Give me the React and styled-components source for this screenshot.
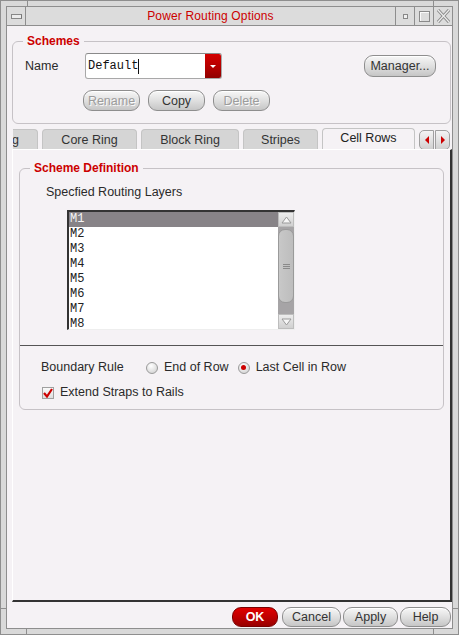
import React from 'react'
import styled, { createGlobalStyle } from 'styled-components'

const GlobalStyle = createGlobalStyle`
  html, body {
    margin: 0;
    padding: 0;
    background: #d9d9d9;
  }
  body {
    font-family: "Liberation Sans", Arial, sans-serif;
    font-size: 12.5px;
    color: #2a2a2a;
  }
`

const RED = '#cc0000'
const LINE = '#8e8e8e'

const Frame = styled.div`
  position: relative;
  box-sizing: border-box;
  width: 459px;
  height: 635px;
  padding: 5px;
  background: #d9d9d9;
  border: 1px solid ${LINE};
`

const Tick = styled.span`
  position: absolute;
  background: ${LINE};
  left: ${(p) => p.$x}px;
  top: ${(p) => p.$y}px;
  width: ${(p) => (p.$v ? 1 : 5)}px;
  height: ${(p) => (p.$v ? 5 : 1)}px;
`

const Inner = styled.div`
  box-sizing: border-box;
  height: 100%;
  display: flex;
  flex-direction: column;
  border: 1px solid ${LINE};
`

const TitleBar = styled.div`
  display: flex;
  height: 18px;
  background: #dcdcdc;
  border-bottom: 1px solid ${LINE};
`

const TitleButton = styled.div`
  width: 18px;
  display: flex;
  align-items: center;
  justify-content: center;
  border-${(p) => (p.$left ? 'right' : 'left')}: 1px solid ${LINE};
`

const MenuBar = styled.span`
  width: 9px;
  height: 3px;
  border: 1px solid #888;
  border-right-color: #777;
  background: #ececec;
`

const MinBox = styled.span`
  width: 3px;
  height: 3px;
  border: 1px solid #888;
  background: #f0f0f0;
`

const MaxBox = styled.span`
  width: 9px;
  height: 9px;
  border: 1px solid #8a8a8a;
  box-shadow: inset 1px 1px 0 #fafafa;
`

const Title = styled.div`
  flex: 1;
  text-align: center;
  color: ${RED};
  font-size: 12px;
  letter-spacing: 0.15px;
  line-height: 18px;
`

const Content = styled.div`
  flex: 1;
  display: flex;
  flex-direction: column;
  background: #f5f2f5;
  padding: 8px 0 0 5px;
`

const Group = styled.fieldset`
  margin: 0 ${(p) => p.$mr || 0}px 0 ${(p) => p.$ml || 0}px;
  padding: 0;
  min-width: 0;
  border: 1px solid #c6c2c6;
  border-radius: 6px;
`

const Legend = styled.legend`
  margin-left: 10px;
  padding: 0 4px;
  color: ${RED};
  font-weight: bold;
  font-size: 12px;
  line-height: 15px;
`

const SchemeBody = styled.div`
  padding: 4px 14px 12px 12px;
`

const Row = styled.div`
  display: flex;
  align-items: center;
  gap: ${(p) => p.$gap || 0}px;
  margin: ${(p) => p.$m || '0'};
`

const Label = styled.span`
  width: ${(p) => (p.$w ? p.$w + 'px' : 'auto')};
  flex: none;
  line-height: 15px;
  white-space: nowrap;
`

const Combo = styled.div`
  display: flex;
  width: 137px;
  height: 26px;
  box-sizing: border-box;
  border: 1px solid #a8a8a8;
  border-top-color: #8a8a8a;
  border-radius: 3px;
  background: #fff;
  overflow: hidden;
`

const ComboText = styled.div`
  flex: 1;
  display: flex;
  align-items: center;
  padding-left: 2px;
  font-family: "Liberation Mono", monospace;
  font-size: 12px;
  color: #111;
`

const Caret = styled.span`
  width: 1px;
  height: 15px;
  background: #111;
`

const ComboArrow = styled.div`
  width: 16px;
  display: flex;
  align-items: center;
  justify-content: center;
  background: linear-gradient(#d40000, #b00000 60%, #900000);
`

const Tri = styled.span`
  width: 0;
  height: 0;
  border-left: 3px solid transparent;
  border-right: 3px solid transparent;
  border-top: 3px solid #fff;
`

const Button = styled.button`
  box-sizing: border-box;
  width: ${(p) => p.$w}px;
  height: ${(p) => p.$h || 21}px;
  padding: 0;
  margin-left: ${(p) => (p.$auto ? 'auto' : '0')};
  border: 1px solid #8e8e8e;
  border-radius: 9px;
  background: linear-gradient(#f7f7f7, #e2e2e2 45%, #c6c6c6);
  box-shadow: inset 0 1px 0 #fff;
  font-family: "Liberation Sans", Arial, sans-serif;
  font-size: 12.5px;
  color: ${(p) => (p.disabled ? '#9c9c9c' : '#333')};
  text-shadow: ${(p) => (p.disabled ? '1px 1px 0 #fafafa' : 'none')};
`

const OkButton = styled(Button)`
  margin-right: 2px;
  border-color: #7a0000;
  background: linear-gradient(#e00000, #c00000 50%, #980000);
  box-shadow: none;
  color: #fff;
  font-weight: bold;
`

const TabStrip = styled.div`
  display: flex;
  align-items: flex-end;
  gap: 4px;
  height: 21px;
  margin: 4px 0 0 1px;
`

const TabClip = styled.div`
  width: 25px;
  height: 20px;
  overflow: hidden;
  display: flex;
  justify-content: flex-end;
  flex: none;
`

const Tab = styled.div`
  box-sizing: border-box;
  flex: none;
  width: ${(p) => p.$w}px;
  height: ${(p) => (p.$active ? 21 : 20)}px;
  display: flex;
  align-items: center;
  justify-content: ${(p) => (p.$end ? 'flex-end' : 'center')};
  padding: ${(p) => (p.$end ? '0 18px 0 0' : p.$active ? '0 0 3px' : '0')};
  border: 1px solid #c4c4c4;
  border-bottom: none;
  border-radius: 4px 4px 0 0;
  background: ${(p) => (p.$active ? '#f5f2f5' : '#d5d5d5')};
  color: ${(p) => (p.$active ? '#222' : '#333')};
  white-space: nowrap;
`

const Arrows = styled.div`
  display: flex;
  gap: 1px;
  margin-bottom: -1px;
  align-self: flex-end;
`

const ArrowBtn = styled.div`
  box-sizing: border-box;
  width: 15px;
  height: 20px;
  display: flex;
  align-items: center;
  justify-content: center;
  border: 1px solid #a0a0a0;
  border-radius: ${(p) => (p.$left ? '5px 0 0 5px' : '0 5px 5px 0')};
  background: linear-gradient(#f4f4f4, #d0d0d0);
`

const SideTri = styled.span`
  width: 0;
  height: 0;
  border-top: 4px solid transparent;
  border-bottom: 4px solid transparent;
  ${(p) => (p.$left ? 'border-right' : 'border-left')}: 4px solid ${RED};
`

const Panel = styled.div`
  flex: 1;
  display: flex;
  flex-direction: column;
  border-top: 1px solid #fff;
  border-left: 1px solid #fff;
  border-right: 2px solid #333;
  border-bottom: 2px solid #333;
  padding-top: 11px;
`

const DefBody = styled.div`
  padding: 9px 0 15px 26px;
`

const ListBox = styled.div`
  display: flex;
  box-sizing: border-box;
  width: 228px;
  height: 120px;
  margin: 10px 0 0 21px;
  border-top: 2px solid #333;
  border-left: 2px solid #333;
  border-right: 1px solid #eee;
  border-bottom: 1px solid #eee;
  background: #fff;
`

const Rows = styled.div`
  flex: 1;
  overflow: hidden;
`

const ListRow = styled.div`
  height: 15px;
  line-height: 15px;
  padding-left: 1px;
  font-family: "Liberation Mono", monospace;
  font-size: 12px;
  background: ${(p) => (p.$sel ? '#878387' : 'transparent')};
  color: ${(p) => (p.$sel ? '#f4f4f4' : '#222')};
`

const ScrollBar = styled.div`
  width: 16px;
  display: flex;
  flex-direction: column;
  background: #a6a4a6;
`

const ScrollBtn = styled.div`
  height: 15px;
  display: flex;
  align-items: center;
  justify-content: center;
  background: linear-gradient(#ececec, #d0d0d0);
  border: 1px solid #bdbdbd;
  box-sizing: border-box;
`

const Thumb = styled.div`
  margin: 2px 0 0;
  height: 74px;
  border-radius: 7px;
  background: linear-gradient(90deg, #c8c8c8, #bdbdbd);
  border: 1px solid #9a9a9a;
  box-sizing: border-box;
  display: flex;
  align-items: center;
  justify-content: center;
`

const Grip = styled.div`
  width: 7px;
  height: 5px;
  background: repeating-linear-gradient(#8a8a8a 0 1px, transparent 1px 2px);
`

const Track = styled.div`
  flex: 1;
`

const Separator = styled.div`
  height: 1px;
  background: #555;
`

const OptionsBody = styled.div`
  padding: 14px 0 9px 21px;
  display: flex;
  flex-direction: column;
  gap: 10px;
`

const Radio = styled.span`
  box-sizing: border-box;
  width: 12px;
  height: 12px;
  border-radius: 50%;
  border: 1px solid #9a9a9a;
  background: radial-gradient(circle at 40% 30%, #ffffff, #d6d6d6 80%);
  display: flex;
  align-items: center;
  justify-content: center;
  flex: none;
  &::after {
    content: '';
    display: ${(p) => (p.$on ? 'block' : 'none')};
    width: 5px;
    height: 5px;
    border-radius: 50%;
    background: ${RED};
  }
`

const Option = styled.label`
  display: flex;
  align-items: center;
  gap: 6px;
  margin-right: 9px;
  line-height: 15px;
`

const Check = styled.span`
  box-sizing: border-box;
  width: 12px;
  height: 12px;
  border: 1px solid #a0a0a0;
  background: linear-gradient(#fafafa, #dedede);
  display: flex;
  align-items: center;
  justify-content: center;
`

const BottomBar = styled.div`
  display: flex;
  justify-content: flex-end;
  gap: 2px;
  padding: 5px 1px 1px 0;
`

const layers = ['M1', 'M2', 'M3', 'M4', 'M5', 'M6', 'M7', 'M8']

export default function App() {
  return (
    <>
      <GlobalStyle />
      <Frame>
        <Tick $v $x={26} $y={0} />
        <Tick $v $x={432} $y={0} />
        <Tick $v $x={25} $y={628} />
        <Tick $v $x={432} $y={628} />
        <Tick $x={0} $y={607} />
        <Tick $x={452} $y={607} />
        <Inner>
          <TitleBar>
            <TitleButton $left>
              <MenuBar />
            </TitleButton>
            <Title>Power Routing Options</Title>
            <TitleButton>
              <MinBox />
            </TitleButton>
            <TitleButton>
              <MaxBox />
            </TitleButton>
            <TitleButton>
              <svg width="15" height="14" viewBox="0 0 15 14">
                <path d="M2 1 L13 13 M13 1 L2 13" stroke="#8a8a8a" strokeWidth="3.2" />
                <path d="M2 1 L13 13 M13 1 L2 13" stroke="#ececec" strokeWidth="1.2" />
              </svg>
            </TitleButton>
          </TitleBar>

          <Content>
            <Group $mr={1}>
              <Legend>Schemes</Legend>
              <SchemeBody>
                <Row>
                  <Label $w={60}>Name</Label>
                  <Combo>
                    <ComboText>
                      Default
                      <Caret />
                    </ComboText>
                    <ComboArrow>
                      <Tri />
                    </ComboArrow>
                  </Combo>
                  <Button $w={72} $h={22} $auto>
                    Manager...
                  </Button>
                </Row>
                <Row $gap={8} $m="11px 0 0 58px">
                  <Button $w={57} disabled>
                    Rename
                  </Button>
                  <Button $w={57}>Copy</Button>
                  <Button $w={57} disabled>
                    Delete
                  </Button>
                </Row>
              </SchemeBody>
            </Group>

            <TabStrip>
              <TabClip>
                <Tab $w={95} $end>
                  Ring
                </Tab>
              </TabClip>
              <Tab $w={95}>Core Ring</Tab>
              <Tab $w={98}>Block Ring</Tab>
              <Tab $w={75}>Stripes</Tab>
              <Tab $w={93} $active>
                Cell Rows
              </Tab>
              <Arrows>
                <ArrowBtn $left>
                  <SideTri $left />
                </ArrowBtn>
                <ArrowBtn>
                  <SideTri />
                </ArrowBtn>
              </Arrows>
            </TabStrip>

            <Panel>
              <Group $ml={6} $mr={6}>
                <Legend>Scheme Definition</Legend>
                <DefBody>
                  <Label>Specfied Routing Layers</Label>
                  <ListBox>
                    <Rows>
                      {layers.map((l, i) => (
                        <ListRow key={l} $sel={i === 0}>
                          {l}
                        </ListRow>
                      ))}
                    </Rows>
                    <ScrollBar>
                      <ScrollBtn>
                        <svg width="11" height="8" viewBox="0 0 11 8">
                          <path d="M1 7 L5.5 1 L10 7 Z" fill="#f6f6f6" stroke="#9a9a9a" />
                        </svg>
                      </ScrollBtn>
                      <Thumb>
                        <Grip />
                      </Thumb>
                      <Track />
                      <ScrollBtn>
                        <svg width="11" height="8" viewBox="0 0 11 8">
                          <path d="M1 1 L5.5 7 L10 1 Z" fill="#f6f6f6" stroke="#9a9a9a" />
                        </svg>
                      </ScrollBtn>
                    </ScrollBar>
                  </ListBox>
                </DefBody>
                <Separator />
                <OptionsBody>
                  <Row>
                    <Label $w={105}>Boundary Rule</Label>
                    <Option>
                      <Radio />
                      End of Row
                    </Option>
                    <Option>
                      <Radio $on />
                      Last Cell in Row
                    </Option>
                  </Row>
                  <Row $gap={6} $m="0 0 0 1px">
                    <Check>
                      <svg width="10" height="10" viewBox="0 0 10 10">
                        <path d="M1 5 L4 8.5 L9 1" fill="none" stroke={RED} strokeWidth="2.2" />
                      </svg>
                    </Check>
                    <Label>Extend Straps to Rails</Label>
                  </Row>
                </OptionsBody>
              </Group>
            </Panel>

            <BottomBar>
              <OkButton $w={46} $h={20}>
                OK
              </OkButton>
              <Button $w={59} $h={20}>
                Cancel
              </Button>
              <Button $w={55} $h={20}>
                Apply
              </Button>
              <Button $w={51} $h={20}>
                Help
              </Button>
            </BottomBar>
          </Content>
        </Inner>
      </Frame>
    </>
  )
}
